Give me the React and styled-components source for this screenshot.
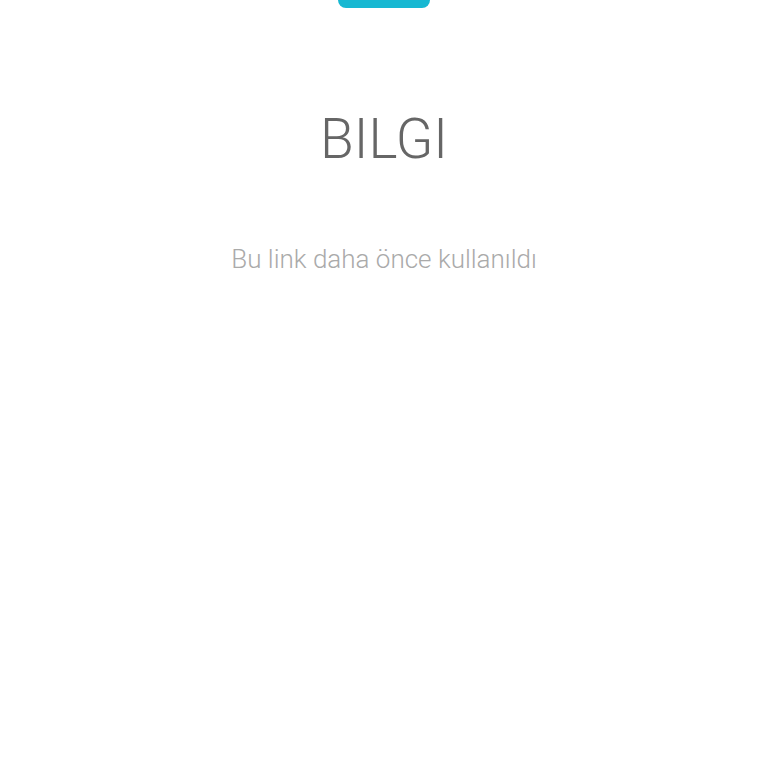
import React from "react";
import styled, { createGlobalStyle } from "styled-components";

const Global = createGlobalStyle`
  html, body { margin: 0; padding: 0; background: #fff; }
  body { font-family: Roboto, "Noto Sans", sans-serif; }
`;

const Page = styled.div`
  display: flex;
  flex-direction: column;
  align-items: center;
  min-height: 768px;
`;

const TopTab = styled.div`
  width: 92px;
  height: 8px;
  background: #17b8d2;
  border-radius: 0 0 9px 9px;
`;

const Title = styled.h1`
  margin: 96px 0 0;
  font-family: Roboto, sans-serif;
  font-weight: 300;
  font-size: 55px;
  line-height: 70px;
  color: #666;
`;

const Message = styled.p`
  margin: 69px 0 0;
  font-family: Roboto, sans-serif;
  font-weight: 300;
  font-size: 26px;
  line-height: 32px;
  color: #aaa;
`;

export default function App() {
  return (
    <>
      <Global />
      <Page>
        <TopTab />
        <Title>BILGI</Title>
        <Message>Bu link daha önce kullanıldı</Message>
      </Page>
    </>
  );
}
